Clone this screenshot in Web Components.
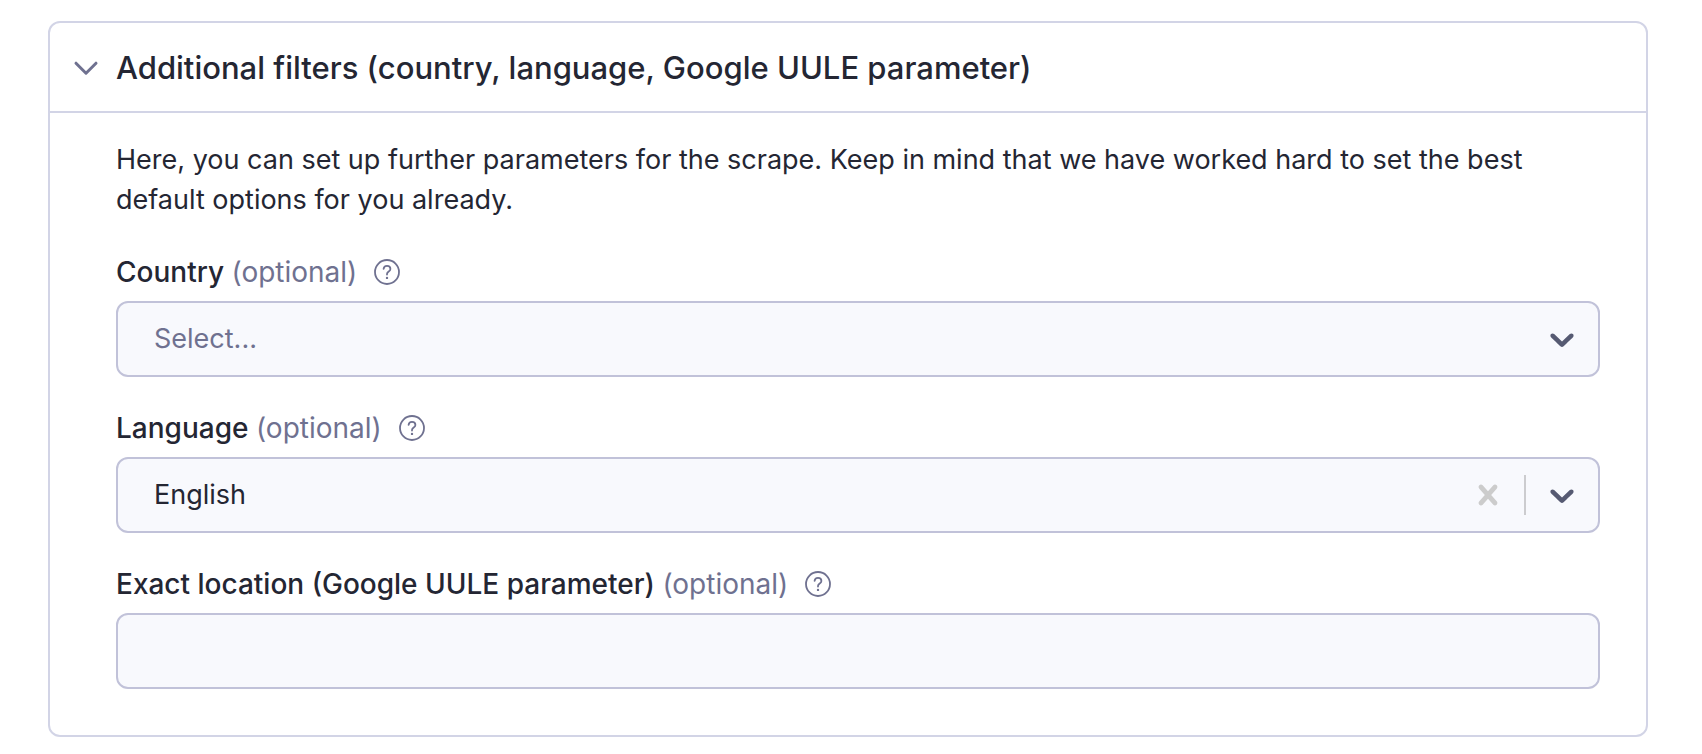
<!DOCTYPE html>
<html lang="en">
<head>
<meta charset="utf-8">
<meta name="viewport" content="width=device-width, initial-scale=1">
<title>Additional filters</title>
<style>
  body {
    margin: 0;
    padding: 21px 54px 16px 48px;
    background: #fff;
    color: #242633;
    font: 400 27px/40px Inter, "Liberation Sans", sans-serif;
    --line: #d2d4e6;
    --field-line: #c1c2d9;
    --field-bg: #f8f9fd;
    --muted: #6f7190;
  }
</style>
</head>
<body>
<filter-panel heading="Additional filters (country, language, Google UULE parameter)">
  <p slot="intro">Here, you can set up further parameters for the scrape. Keep in mind that we have worked hard to set the best default options for you already.</p>
  <select-field label="Country" options="English-speaking,United States,United Kingdom,Germany"></select-field>
  <select-field label="Language" value="English" options="English,German,French,Spanish"></select-field>
  <text-field label="Exact location (Google UULE parameter)"></text-field>
</filter-panel>

<script>
class FilterPanel extends HTMLElement {
  connectedCallback() {
    const root = this.attachShadow({ mode: 'open' });
    root.innerHTML = `
      <style>
        :host { display: block; border: 2px solid var(--line); border-radius: 12px; background: #fff; }
        h2 { margin: 0; font: inherit; }
        button {
          display: flex; align-items: center; gap: 14px; width: 100%;
          padding: 25px 20px 23px; border: 0; border-radius: 10px 10px 0 0; background: none; color: inherit;
          font: 500 31px/40px Inter, "Liberation Sans", sans-serif; text-align: left; cursor: pointer;
        }
        svg { flex: none; width: 32px; height: 32px; color: var(--muted); }
        button[aria-expanded="false"] svg { transform: rotate(-90deg); }
        .body { display: grid; gap: 31px; padding: 27px 46px 46px 66px; border-top: 2px solid var(--line); }
        .body[hidden] { display: none; }
        ::slotted(p) { margin: 0 0 1px; }
      </style>
      <h2><button type="button" aria-expanded="true" aria-controls="body">
        <svg viewBox="0 0 32 32" fill="none" stroke="currentColor" stroke-width="3" stroke-linecap="round" stroke-linejoin="round" aria-hidden="true"><path d="M6 11.2 16 21.2 26 11.2"/></svg>
        <span></span>
      </button></h2>
      <div class="body" id="body"><slot name="intro"></slot><slot></slot></div>`;
    const button = root.querySelector('button');
    root.querySelector('span').textContent = this.getAttribute('heading');
    button.addEventListener('click', () => {
      const open = button.getAttribute('aria-expanded') === 'true';
      button.setAttribute('aria-expanded', String(!open));
      root.querySelector('.body').hidden = open;
    });
  }
}

class HelpButton extends HTMLElement {
  connectedCallback() {
    this.attachShadow({ mode: 'open' }).innerHTML = `
      <style>
        :host { display: flex; }
        button { display: flex; padding: 0; border: 0; background: none; color: var(--muted); cursor: pointer; }
        svg { width: 28px; height: 28px; }
      </style>
      <button type="button" aria-label="Help">
        <svg viewBox="0 0 28 28" fill="none" stroke="currentColor" stroke-width="1.8" stroke-linecap="round" stroke-linejoin="round" aria-hidden="true">
          <circle cx="14" cy="14" r="12"/>
          <path d="M10.6 10.9C10.8 9 12.2 7.9 14 7.9c2 0 3.4 1.200 3.400 3 0 1.300-.7 2-1.700 2.700-1.100.8-1.700 1.300-1.700 2.500v.4"/>
          <circle cx="14" cy="19.900" r="1.200" fill="currentColor" stroke="none"/>
        </svg>
      </button>`;
  }
}

const fieldStyles = `
  :host { display: grid; gap: 9px; }
  .caption { display: flex; align-items: center; gap: 16px; }
  label { font-size: 28px; font-weight: 500; }
  label span { color: var(--muted); font-weight: 400; }
  input, select {
    box-sizing: border-box; width: 100%; height: 76px; margin: 0; padding: 0 36px;
    border: 2px solid var(--field-line); border-radius: 12px; background: var(--field-bg);
    color: inherit; font: inherit; appearance: none;
  }`;

const caption = text => `
  <div class="caption">
    <label for="control">${text} <span>(optional)</span></label>
    <help-button></help-button>
  </div>`;

class SelectField extends HTMLElement {
  connectedCallback() {
    const value = this.getAttribute('value') || '';
    const options = this.getAttribute('options').split(',')
      .map(name => `<option${name === value ? ' selected' : ''}>${name}</option>`).join('');
    const root = this.attachShadow({ mode: 'open' });
    root.innerHTML = `
      <style>
        ${fieldStyles}
        .box { display: grid; align-items: center; }
        .box > * { grid-area: 1 / 1; }
        select.empty { color: var(--muted); }
        .tools { display: flex; align-items: center; gap: 16px; justify-self: end; padding-right: 18px; pointer-events: none; }
        svg { display: block; width: 40px; height: 40px; fill: currentColor; }
        .arrow { color: #565a72; }
        button { padding: 0; border: 0; background: none; color: #cccccc; cursor: pointer; pointer-events: auto; }
        .rule { width: 2px; height: 40px; background: #cccccf; }
        .empty + .tools button, .empty + .tools .rule { display: none; }
      </style>
      ${caption(this.getAttribute('label'))}
      <div class="box">
        <select id="control"><option value="" hidden>Select...</option>${options}</select>
        <div class="tools">
          <button type="button" aria-label="Clear"><svg viewBox="0 0 20 20" aria-hidden="true"><path d="M14.348 14.849c-0.469 0.469-1.229 0.469-1.697 0l-2.651-3.030-2.651 3.029c-0.469 0.469-1.229 0.469-1.697 0-0.469-0.469-0.469-1.229 0-1.697l2.758-3.150-2.759-3.152c-0.469-0.469-0.469-1.228 0-1.697s1.228-0.469 1.697 0l2.652 3.031 2.651-3.031c0.469-0.469 1.228-0.469 1.697 0s0.469 1.229 0 1.697l-2.758 3.152 2.758 3.150c0.469 0.469 0.469 1.229 0 1.698z"/></svg></button>
          <div class="rule"></div>
          <svg class="arrow" viewBox="0 0 20 20" aria-hidden="true"><path d="M4.516 7.548c0.436-0.446 1.043-0.481 1.576 0l3.908 3.747 3.908-3.747c0.533-0.481 1.141-0.446 1.574 0 0.436 0.445 0.408 1.197 0 1.615-0.406 0.418-4.695 4.502-4.695 4.502-0.217 0.223-0.502 0.335-0.787 0.335s-0.570-0.112-0.789-0.335c0 0-4.287-4.084-4.695-4.502s-0.436-1.170 0-1.615z"/></svg>
        </div>
      </div>`;
    const select = root.querySelector('select');
    const update = () => select.classList.toggle('empty', !select.value);
    select.addEventListener('change', update);
    root.querySelector('.tools button').addEventListener('click', () => { select.value = ''; update(); });
    update();
  }
}

class TextField extends HTMLElement {
  connectedCallback() {
    this.attachShadow({ mode: 'open' }).innerHTML = `
      <style>${fieldStyles}</style>
      ${caption(this.getAttribute('label'))}
      <input id="control" type="text">`;
  }
}

customElements.define('help-button', HelpButton);
customElements.define('select-field', SelectField);
customElements.define('text-field', TextField);
customElements.define('filter-panel', FilterPanel);
</script>
</body>
</html>
